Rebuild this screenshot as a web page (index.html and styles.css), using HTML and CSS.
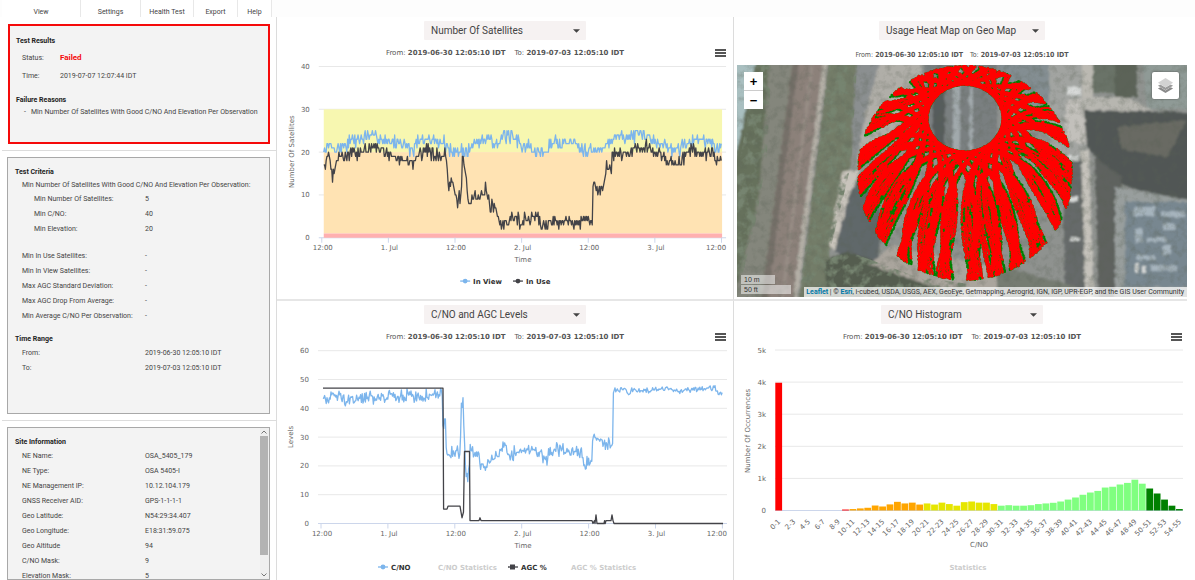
FILE: index.html
```
<!DOCTYPE html>
<html lang="en">
<head>
<meta charset="utf-8">
<title>GNSS Health Test</title>
<link rel="stylesheet" href="styles.css">
</head>
<body>
<nav class="ribbon">
  <button class="ribbon-tab tab-view" type="button">View</button>
  <button class="ribbon-tab tab-settings" type="button">Settings</button>
  <button class="ribbon-tab tab-health" type="button">Health Test</button>
  <button class="ribbon-tab tab-export" type="button">Export</button>
  <button class="ribbon-tab tab-help" type="button">Help</button>
</nav>
<main class="board">
  <aside class="sidebar">
    <div class="slot">
      <section class="card results">
        <h2>Test Results</h2>
        <dl class="facts wide">
          <div><dt>Status:</dt><dd class="failed">Failed</dd></div>
          <div><dt>Time:</dt><dd>2019-07-07 12:07:44 IDT</dd></div>
        </dl>
        <h2>Failure Reasons</h2>
        <ul class="reasons"><li>Min Number Of Satellites With Good C/NO And Elevation Per Observation</li></ul>
      </section>
    </div>
    <div class="slot">
      <section class="card criteria">
        <h2>Test Criteria</h2>
        <p class="lead">Min Number Of Satellites With Good C/NO And Elevation Per Observation:</p>
        <dl class="facts nested">
          <div><dt>Min Number Of Satellites:</dt><dd>5</dd></div>
          <div><dt>Min C/NO:</dt><dd>40</dd></div>
          <div><dt>Min Elevation:</dt><dd>20</dd></div>
        </dl>
        <dl class="facts limits">
          <div><dt>Min In Use Satellites:</dt><dd>-</dd></div>
          <div><dt>Min In View Satellites:</dt><dd>-</dd></div>
          <div><dt>Max AGC Standard Deviation:</dt><dd>-</dd></div>
          <div><dt>Max AGC Drop From Average:</dt><dd>-</dd></div>
          <div><dt>Min Average C/NO Per Observation:</dt><dd>-</dd></div>
        </dl>
        <h2>Time Range</h2>
        <dl class="facts">
          <div><dt>From:</dt><dd>2019-06-30 12:05:10 IDT</dd></div>
          <div><dt>To:</dt><dd>2019-07-03 12:05:10 IDT</dd></div>
        </dl>
      </section>
    </div>
    <div class="slot last">
      <section class="card site">
        <div class="site-body">
          <h2>Site Information</h2>
          <dl class="facts">
            <div><dt>NE Name:</dt><dd>OSA_5405_179</dd></div>
            <div><dt>NE Type:</dt><dd>OSA 5405-I</dd></div>
            <div><dt>NE Management IP:</dt><dd>10.12.104.179</dd></div>
            <div><dt>GNSS Receiver AID:</dt><dd>GPS-1-1-1-1</dd></div>
            <div><dt>Geo Latitude:</dt><dd>N54:29:34.407</dd></div>
            <div><dt>Geo Longitude:</dt><dd>E18:31:59.075</dd></div>
            <div><dt>Geo Altitude</dt><dd>94</dd></div>
            <div><dt>C/NO Mask:</dt><dd>9</dd></div>
            <div><dt>Elevation Mask:</dt><dd>5</dd></div>
          </dl>
        </div>
        <div class="scrollbar">
          <svg viewBox="0 0 8 8"><path d="M1.5 5.5 4 3l2.5 2.5"/></svg>
          <div class="thumb"></div>
          <svg viewBox="0 0 8 8"><path d="M1.5 2.5 4 5l2.5-2.5"/></svg>
        </div>
      </section>
    </div>
  </aside>

  <section class="panel">
    <label class="picker"><select aria-label="Chart 1"><option>Number Of Satellites</option><option>C/NO and AGC Levels</option></select><svg viewBox="0 0 8 4"><path d="M0 0h8L4 4z"/></svg></label>
    <div class="caption"><span>From: <b>2019-06-30 12:05:10 IDT</b></span><span>To: <b>2019-07-03 12:05:10 IDT</b></span>
      <button class="menu" type="button" aria-label="Chart menu"><i></i><i></i><i></i></button></div>
    <svg class="plot" id="satellites" viewBox="0 0 456 240"></svg>
  </section>

  <section class="panel map-panel">
    <label class="picker map-picker"><select aria-label="Chart 2"><option>Usage Heat Map on Geo Map</option><option>C/NO Histogram</option></select><svg viewBox="0 0 8 4"><path d="M0 0h8L4 4z"/></svg></label>
    <div class="caption map-caption"><span>From: <b>2019-06-30 12:05:10 IDT</b></span><span>To: <b>2019-07-03 12:05:10 IDT</b></span></div>
    <div class="map">
      <svg class="imagery" viewBox="0 0 450 232" preserveAspectRatio="xMidYMid slice">
        <defs>
          <filter id="soft" x="-5%" y="-5%" width="110%" height="110%"><feTurbulence type="fractalNoise" baseFrequency=".2" numOctaves="2" seed="4"/><feDisplacementMap in="SourceGraphic" scale="4" xChannelSelector="R" yChannelSelector="G"/><feGaussianBlur stdDeviation=".8"/></filter>
          <filter id="grain" x="0" y="0" width="100%" height="100%"><feTurbulence type="fractalNoise" baseFrequency=".12" numOctaves="4" seed="9"/><feColorMatrix values="0 0 0 0 .1  0 0 0 0 .12  0 0 0 0 .09  2.6 0 0 0 -1.15"/></filter>
          <filter id="leaf" x="0" y="0" width="100%" height="100%"><feTurbulence type="fractalNoise" baseFrequency=".1" numOctaves="3" seed="2"/><feColorMatrix values="0 0 0 0 .18  0 0 0 0 .23  0 0 0 0 .16  4 0 0 0 -1.8"/><feComposite in2="SourceGraphic" operator="in"/></filter>
        </defs>
        <rect width="450" height="232" fill="#8f928f"/>
        <g filter="url(#soft)">
          <path d="M-5-5H24L-5 110z" fill="#a9bfc0"/>
          <path d="M20-5H34L30 90 18 160-5 240V110z" fill="#66715c"/>
          <path d="M32-5H58L25 240H-5L22 130z" fill="#84867b"/>
          <path d="M56-5H90L58 240H24z" fill="#8c817a"/>
          <path d="M56-5H62L30 240H24z" fill="#767069"/>
          <path d="M74-5H77L46 240H43z" fill="#988e86"/>
          <path d="M86-5H91L60 240H55z" fill="#b3afa6"/>
          <path d="M92-5H120L114 100 92 190 110 240H62z" fill="#737c67"/>
          <path d="M120-5H145L132 80 118 105 115 60z" fill="#8b8f90"/>
          <path d="M143-5H186L180 40 118 104 128 50z" fill="#b0aea8"/>
          <path d="M105 106 124 105 98 186 92 180z" fill="#c9c4bc"/>
          <path d="M112 130 124 107 145 150 140 205 98 186z" fill="#61686b"/>
          <path d="M88 196 110 186 180 212 300 215V240H90z" fill="#555d50"/>
          <path d="M132 200 155 180 300 212 340 240H250z" fill="#aaa59d"/>
          <path d="M188-5H260V90H190z" fill="#7a7f80"/>
          <path d="M196 20h12v70h-12z" fill="#565b5b"/>
          <path d="M216-5h7V95h-7zM232-5h4V95h-4z" fill="#a1a9ac"/>
          <path d="M262-5h50V40h-50z" fill="#848e92"/>
          <path d="M312-5h36V110h-36z" fill="#a2a4a1"/>
          <path d="M330 35 350 33 352 80 326 75z" fill="#c2c0bb"/>
          <path d="M345-5h11V40h-11z" fill="#bbb9b2"/>
          <path d="M356-5h22V28h-22z" fill="#6a7368"/>
          <path d="M378-5h22V32h-22z" fill="#5b6459"/>
          <path d="M405-5H460V44H410z" fill="#8f9a96"/>
          <path d="M345 32H390L420 48H345z" fill="#b7b6b0"/>
          <path d="M347 45 460 48V145L380 118 350 82z" fill="#515654"/>
          <path d="M380 62 450 55 430 92 385 84z" fill="#696b63"/>
          <path d="M358 92 384 112V240H362z" fill="#5e625f"/>
          <path d="M344 85H352L357 240H348z" fill="#c5c2bb"/>
          <path d="M326 90H344L348 225H328z" fill="#666b6a"/>
          <path d="M378 122 460 136V240H378z" fill="#989e9d"/>
          <path d="M388 137H460V222H388z" fill="#788790"/>
          <g fill="#a6b4bd"><path d="M396 142h22v9h-22zM424 146h24v6h-24zM398 164h8v14h-8zM410 172h20v5h-20zM426 158h12v7h-12zM400 190h18v5h-18zM426 180h8v10h-8zM414 200h26v6h-26z"/></g>
          <g fill="#d7d9d8"><path d="M330 90h12v6h-12zM330 132h11v4h-11zM333 172h9v4h-9zM330 22h14v8h-14zM398 198h4v10h-4zM405 200h3v8h-3z"/></g>
          <path d="M260 200 340 222V240H260z" fill="#767b72"/>
        </g>
        <path d="M20 0H34L30 90 18 160 0 232V110zM92 0H120L114 100 92 190 110 232H62zM88 196 110 186 180 212 240 220V232H90z" fill="#000" filter="url(#leaf)"/>
        <rect width="450" height="232" filter="url(#grain)" opacity=".3"/>
        <g id="tracks" fill="none" stroke-linecap="round" stroke-linejoin="round"></g>
      </svg>
      <div class="zoomer"><button type="button" aria-label="Zoom in">+</button><button type="button" aria-label="Zoom out">−</button></div>
      <button class="layers" type="button" aria-label="Layers"><svg viewBox="0 0 18 18"><path d="M1 12.2 9 17l8-4.8-2.5-1.3L9 14.2l-5.500-3.300z" fill="#8a8a8a"/><path d="M1 9.200 9 14l8-4.800-2.500-1.300L9 11.200 3.500 7.900z" fill="#9b9b9b"/><path d="M1 6 9 1l8 5-8 5z" fill="#d2d2d2"/></svg></button>
      <div class="scale"><span class="metric">10 m</span><span class="imperial">50 ft</span></div>
      <div class="credit"><a href="#leaflet">Leaflet</a> | © <a href="#esri">Esri</a>, i-cubed, USDA, USGS, AEX, GeoEye, Getmapping, Aerogrid, IGN, IGP, UPR-EGP, and the GIS User Community</div>
    </div>
  </section>

  <section class="panel">
    <label class="picker"><select aria-label="Chart 3"><option>C/NO and AGC Levels</option><option>Number Of Satellites</option></select><svg viewBox="0 0 8 4"><path d="M0 0h8L4 4z"/></svg></label>
    <div class="caption"><span>From: <b>2019-06-30 12:05:10 IDT</b></span><span>To: <b>2019-07-03 12:05:10 IDT</b></span>
      <button class="menu" type="button" aria-label="Chart menu"><i></i><i></i><i></i></button></div>
    <svg class="plot" id="levels" viewBox="0 0 456 236"></svg>
  </section>

  <section class="panel histogram-panel">
    <label class="picker"><select aria-label="Chart 4"><option>C/NO Histogram</option><option>Usage Heat Map on Geo Map</option></select><svg viewBox="0 0 8 4"><path d="M0 0h8L4 4z"/></svg></label>
    <div class="caption"><span>From: <b>2019-06-30 12:05:10 IDT</b></span><span>To: <b>2019-07-03 12:05:10 IDT</b></span>
      <button class="menu" type="button" aria-label="Chart menu"><i></i><i></i><i></i></button></div>
    <svg class="plot" id="histogram" viewBox="0 0 450 236"></svg>
  </section>
</main>
<script src="charts.js"></script>
</body>
</html>
```
FILE: styles.css
```
* { box-sizing: border-box; }
body {
  margin: 0;
  height: 100vh;
  display: flex;
  flex-direction: column;
  overflow: hidden;
  background: #fff;
  color: #444;
  font: 7px/15px Roboto, "Open Sans", sans-serif;
}
button, select { font: inherit; color: inherit; border: 0; margin: 0; padding: 0; }

.ribbon { display: flex; height: 17px; padding-left: 2px; background: #fdfdfd; flex: none; }
.ribbon-tab { background: #fff; border-right: 1px solid #e8e8e8; padding-top: 6px; line-height: 10px; }
.tab-view { width: 79px; }
.tab-settings { width: 60px; }
.tab-health { width: 53px; }
.tab-export { width: 44px; }
.tab-help { width: 34px; }

.board {
  flex: 1;
  min-height: 0;
  display: grid;
  grid-template-columns: 277px 457fr 453fr;
  grid-template-rows: 284fr 279fr;
  padding-right: 8px;
}

.sidebar {
  grid-row: 1 / 3;
  display: flex;
  flex-direction: column;
  min-height: 0;
  padding-left: 2px;
  border-right: 1px solid #dcdcdc;
}
.slot { padding: 6px 6px 6px 5px; border-bottom: 1px solid #dcdcdc; flex: none; }
.slot:first-child { padding-top: 7px; }
.slot.last { flex: 1; min-height: 0; border-bottom: 0; padding-bottom: 0; display: flex; }
.card { background: #f3f3f3; border: 1px solid #a8a8a8; padding: 8px 7px; }
.results { border: 2px solid #f50a0a; margin-left: 1px; min-height: 120px; padding: 9px 6px; }
.criteria { min-height: 257px; }
.site { flex: 1; display: flex; padding: 0; overflow: hidden; }
.site-body { flex: 1; padding: 8px 7px; white-space: nowrap; }
h2 { margin: 0 0 1px; font-size: 7px; line-height: 12px; font-weight: 700; color: #222; }
.facts { margin: 0; padding-left: 7px; }
.facts div { display: flex; }
.facts dt { width: 123px; white-space: nowrap; }
.facts dd { margin: 0; }
.facts.wide { line-height: 18px; margin-top: 2px; padding-left: 6px; }
.facts.wide dt { width: 38px; }
.facts .failed { color: #f50a0a; font-weight: 700; font-size: 8px; }
.facts.wide + h2 { margin: 9px 0 0; }
.facts.nested { padding-left: 19px; }
.facts.nested dt { width: 111px; }
.limits { margin-top: 12px; }
.limits + h2 { margin-top: 9px; }
.lead { margin: 0 0 1px; padding-left: 7px; line-height: 12px; white-space: nowrap; }
.reasons { margin: 0; padding-left: 8px; list-style: none; line-height: 12px; white-space: nowrap; }
.reasons li::before { content: "-"; display: inline-block; width: 7px; }
.scrollbar { width: 9px; display: flex; flex-direction: column; background: #efefef; }
.scrollbar svg { width: 8px; height: 8px; flex: none; fill: none; stroke: #777; }
.thumb { flex: none; height: 119px; width: 8px; background: #b3b3b3; margin-bottom: auto; }

.panel {
  display: flex;
  flex-direction: column;
  min-width: 0;
  min-height: 0;
  padding-top: 4px;
  border-right: 1px solid #dcdcdc;
}
.panel:nth-child(-n + 3) { border-bottom: 2px solid #e6e6e6; }
.map-panel, .histogram-panel { border-right: 0; padding-left: 3px; }
.picker { position: relative; align-self: center; width: 162px; height: 19px; flex: none; }
.map-picker { width: 166px; }
.picker select {
  width: 100%;
  height: 100%;
  appearance: none;
  background: #f6f2f2;
  border-radius: 1px;
  padding: 0 7px;
  font-size: 10px;
}
.picker svg { position: absolute; right: 6px; top: 8px; width: 7px; height: 4px; fill: #444; pointer-events: none; }
.caption {
  position: relative;
  display: flex;
  justify-content: center;
  gap: 9px;
  flex: none;
  padding-top: 6px;
  height: 20px;
  font: 7px/15px "DejaVu Sans", sans-serif;
  color: #555;
}
.map-caption { font-family: "DejaVu Sans Condensed", "DejaVu Sans", sans-serif; padding-top: 8px; height: 25px; gap: 7px; }
.menu {
  position: absolute;
  right: 7px;
  top: 9px;
  width: 11px;
  background: none;
  display: grid;
  gap: 1px;
}
.histogram-panel .menu { right: 5px; }
.menu i { height: 2px; background: #555; }

.plot { flex: 1; min-height: 0; width: 100%; display: block; font: 7px "DejaVu Sans", sans-serif; fill: #666; }
.plot line { stroke: #e8e8e8; }
.plot .axis { stroke: #ccd6eb; }
.plot .legend { font-weight: 700; fill: #333; }
.plot .legend.off { fill: #ccc; }

.map { position: relative; flex: 1; min-height: 0; overflow: hidden; margin-bottom: 2px; background: #888; }
.imagery { display: block; width: 100%; height: 100%; }
.zoomer { position: absolute; left: 7px; top: 7px; width: 19px; display: grid; gap: 1px; background: #ccc; border-radius: 2px; }
.zoomer button { height: 18px; background: #fff; color: #000; font: 700 13px/17px "Liberation Sans", sans-serif; }
.layers { position: absolute; right: 8px; top: 7px; width: 27px; height: 27px; background: #fff; border-radius: 2px; box-shadow: 0 0 2px #444; padding: 5px; }
.layers svg { display: block; width: 17px; height: 17px; }
.scale { position: absolute; left: 4px; bottom: 3px; font: 7px/9px "Liberation Sans", sans-serif; color: #333; display: grid; gap: 1px; }
.scale span { background: rgba(255, 255, 255, .5); padding-left: 3px; height: 9px; }
.metric { width: 34px; }
.imperial { width: 50px; }
.credit {
  position: absolute;
  right: 0;
  bottom: 0;
  padding: 0 3px 0 2px;
  background: rgba(255, 255, 255, .72);
  font: 7px/10px Roboto, sans-serif;
  color: #333;
  white-space: nowrap;
}
.credit a { color: #0078a8; text-decoration: none; font-weight: 700; }
```
FILE: charts.js
```
const NS = 'http://www.w3.org/2000/svg';
function add(parent, tag, attrs, text) {
  const el = document.createElementNS(NS, tag);
  for (const k in attrs) el.setAttribute(k, attrs[k]);
  if (text !== undefined) el.textContent = text;
  parent.appendChild(el);
  return el;
}
let seed = 7;
function rnd() {
  seed = (seed * 1664525 + 1013904223) % 4294967296;
  return seed / 4294967296;
}
function envelope(points, x) {
  for (let i = 1; i < points.length; i++) {
    const [x0, v0] = points[i - 1], [x1, v1] = points[i];
    if (x <= x1) return v0 + (v1 - v0) * (x - x0) / (x1 - x0 || 1);
  }
  return points[points.length - 1][1];
}
function trace(s, toY) {
  let d = '';
  for (let x = 0; x <= 400; x += 0.8) {
    const spread = s.calmFrom && x > s.calmFrom ? 1.1 : s.spread;
    let v = envelope(s.points, x) + (rnd() + rnd() - 1) * spread;
    if (s.whole) v = Math.max(2, Math.round(v));
    d += (d ? 'L' : 'M') + (46 + x).toFixed(1) + ' ' + toY(v).toFixed(1);
  }
  return d;
}
function timeChart(svg, o) {
  const toY = v => o.zero - v * o.unit;
  for (let v = 0; v <= o.max; v += 10) {
    add(svg, 'line', { x1: 41, x2: 450, y1: toY(v), y2: toY(v), class: v ? '' : 'axis' });
    add(svg, 'text', { x: 32, y: toY(v) + 2.5, 'text-anchor': 'end' }, v);
  }
  (o.bands || []).forEach(([a, b, fill]) =>
    add(svg, 'rect', { x: 46, width: 400, y: toY(b), height: toY(a) - toY(b), fill }));
  ['12:00', '1. Jul', '12:00', '2. Jul', '12:00', '3. Jul', '12:00'].forEach((t, i) => {
    const x = 44 + i * 66.9;
    add(svg, 'line', { x1: x, x2: x, y1: o.zero, y2: o.zero + 5, class: 'axis' });
    add(svg, 'text', { x: i === 6 ? 450 : x + 1, y: o.zero + 12, 'text-anchor': i === 6 ? 'end' : 'middle' }, t);
  });
  add(svg, 'text', { x: 246, y: o.zero + 24, 'text-anchor': 'middle' }, 'Time');
  add(svg, 'text', { transform: `translate(16 ${o.titleY}) rotate(-90)`, 'text-anchor': 'middle' }, o.title);
  o.series.forEach(s => add(svg, 'path', {
    d: s.raw ? s.points.map(([x, v], i) => (i ? 'L' : 'M') + (46 + x) + ' ' + toY(v)).join('') : trace(s, toY),
    fill: 'none', stroke: s.color, 'stroke-width': 1.3, 'stroke-linejoin': 'round'
  }));
  o.legend.forEach(([t, x, color, square]) => {
    const y = o.legendY;
    if (color) {
      add(svg, 'path', { d: `M${x - 13} ${y}h10`, stroke: color, 'stroke-width': 1.3 });
      if (square) add(svg, 'rect', { x: x - 11, y: y - 2.5, width: 5, height: 5, fill: color });
      else add(svg, 'circle', { cx: x - 8, cy: y, r: 2.4, fill: color });
    }
    add(svg, 'text', { x, y: y + 2.5, class: color ? 'legend' : 'legend off' }, t);
  });
}
const BLUE = '#7cb5ec', DARK = '#434348';

timeChart(document.getElementById('satellites'), {
  zero: 178.5, unit: 4.3, max: 40, title: 'Number Of Satellites', titleY: 92, legendY: 222,
  bands: [[20, 30, '#f7f7b0'], [1, 20, '#ffe3b3'], [0, 1, '#ffb0b0']],
  series: [
    { color: BLUE, spread: 2.1, whole: true, points: [[0,19.5],[3,21.5],[12,20.8],[21,21.5],[31,23],[55,23.7],[65,22.5],[83,22],[88,20],[93,22],[105,23],[120,22.3],[125,20.3],[145,20.3],[151,22],[165,23.7],[175,22],[181,23.7],[187,23.5],[198,22],[210,20.5],[224,19.8],[227,22],[253,22.5],[260,21],[278,20.3],[283,21.5],[292,23.7],[330,23.5],[337,22],[357,20.5],[360,22.5],[380,23],[390,21.5],[400,20.5]] },
    { color: DARK, spread: 2.2, whole: true, points: [[0,17.5],[3,17.5],[5,20],[8,14.8],[13,18],[18,19],[25,20],[45,20.5],[56,22],[62,19.5],[75,18],[90,17.5],[95,20],[105,20.5],[115,19],[122,19],[124,16],[126,12],[128,13],[132,9],[135,8],[137,10],[138.2,10],[138.8,20],[140,19.5],[142,16],[144,10],[147,7],[150,10],[160,10],[163,11.5],[165,8.5],[172,7],[177,4],[180,3.2],[185,3.2],[188,5],[200,3.8],[209,5],[213,5],[219,2.6],[224,2.6],[225,4],[234,3.3],[242,5],[250,2.8],[259,4],[264,5],[267,3.5],[269.5,3],[270.4,12],[275,11],[279,11.5],[284,16.5],[289,16],[290,20],[304,20],[312,20.3],[324,21.8],[330,20],[340,18.5],[350,17.5],[359,17.5],[364,20],[370,21],[380,19.5],[387,20],[394,18],[400,18]] }
  ],
  legend: [['In View', 196, BLUE], ['In Use', 249, DARK]]
});

timeChart(document.getElementById('levels'), {
  zero: 179.5, unit: 2.88, max: 60, title: 'Levels', titleY: 93, legendY: 223,
  series: [
    { color: BLUE, spread: 2.8, calmFrom: 290, points: [[0,44],[5,42.8],[8,44.5],[25,43.2],[40,43.5],[75,44],[88,44.8],[100,43],[103,44.8],[119.6,45.5],[120,35.5],[122.4,35.5],[123,25],[128,24],[134,26],[137,23.5],[138.3,42],[140,42],[141,30],[143,17],[146,17],[147,26],[151,24],[156,24],[158,20],[163,19.5],[170,22],[180,26.5],[188,23.5],[194,25.5],[217,25],[224,21.5],[226,25],[234,25.5],[259,25],[260.5,21],[269,20.8],[270,31],[273,30],[284,27.5],[289.8,28.5],[290.4,46.3],[302,46.3],[306,44.8],[309,46.5],[325,46],[345,47],[355,46],[375,46.5],[392,47],[395,45],[400,45.5]] },
    { color: DARK, raw: true, points: [[0,47],[120,47],[120.6,5],[124,5],[125,6],[137,6],[139,2],[140.5,4],[141.5,25],[146.5,25],[147,1],[156,1],[157,2],[158,1],[269,1],[270,0],[271.5,1],[272,0],[273,3],[274,0],[281,0],[281.6,1],[282.2,0],[283,1],[288,1],[289,3],[290,1],[291,0],[400,0]] }
  ],
  legend: [['C/NO', 114, BLUE], ['C/NO Statistics', 161], ['AGC %', 244, DARK, true], ['AGC % Statistics', 294]]
});

const hist = document.getElementById('histogram');
for (let k = 0; k <= 5; k++) {
  const y = 166.5 - k * 32.1;
  add(hist, 'line', { x1: 38, x2: 446, y1: y, y2: y, class: k ? '' : 'axis' });
  add(hist, 'text', { x: 29, y: y + 2.5, 'text-anchor': 'end' }, k ? k + 'k' : '0');
}
const counts = [3980,0,0,0,0,0,0,0,0,30,45,65,85,155,125,190,270,220,245,185,220,185,245,200,150,260,280,245,245,200,150,165,150,150,165,200,220,240,280,340,405,490,560,610,715,740,810,860,960,835,685,530,340,150,45];
counts.forEach((c, i) => {
  const fill = i < 10 ? '#ff0000' : i < 20 ? '#ffa500' : i < 30 ? '#e6e600' : i < 50 ? '#80ff80' : '#008000';
  const x = 38 + i * 7.42, h = c * 0.0321;
  if (c) add(hist, 'rect', { x: x + 0.3, width: 6.8, y: 166.5 - h, height: h, fill });
  if (i % 2 === 0) add(hist, 'text', { transform: `translate(${x + 6} 178) rotate(-45)`, 'text-anchor': 'end' }, i + '-' + (i + 1));
});
add(hist, 'text', { x: 242, y: 203, 'text-anchor': 'middle' }, 'C/NO');
add(hist, 'text', { transform: 'translate(13 87) rotate(-90)', 'text-anchor': 'middle' }, 'Number Of Occurrences');
add(hist, 'text', { x: 231, y: 225.5, 'text-anchor': 'middle', class: 'legend off' }, 'Statistics');

/* Sky plot of satellite passes: orbit geometry seen from the site, north up. */
const RAD = Math.PI / 180, SITE = 54.5 * RAD, INCL = 67.5 * RAD;
function skyPoint(u, node) {
  const lat = Math.asin(Math.sin(INCL) * Math.sin(u));
  const lon = node + Math.atan2(Math.cos(INCL) * Math.sin(u), Math.cos(u)) - u / 2;
  const n = Math.cos(SITE) * Math.sin(lat) - Math.sin(SITE) * Math.cos(lat) * Math.cos(lon);
  const e = Math.cos(lat) * Math.sin(lon);
  const up = Math.sin(SITE) * Math.sin(lat) + Math.cos(SITE) * Math.cos(lat) * Math.cos(lon) - 0.24;
  const flat = Math.hypot(n, e), zen = Math.atan2(flat, up) / RAD;
  if (zen > 86) return null;
  const r = zen / 86 * 107;
  return [228 + e / flat * r, 108 - n / flat * r];
}
let green = '', red = '';
for (let s = 0; s < 28; s++) {
  const node = (s * 12.857 + rnd() * 6) * RAD;
  for (let k = 0; k < 4; k++) {
    let on = true;
    for (let u = 0; u < 4 * Math.PI; u += 0.016) {
      const p = skyPoint(u, node + (k - 1.5) * 0.023);
      if (!p) continue;
      if (rnd() < 0.2) on = rnd() < (k === 3 ? 0.2 : 0.85);
      const dot = `M${(p[0] + rnd() - 0.5).toFixed(1)} ${(p[1] + rnd() - 0.5).toFixed(1)}h0`;
      green += dot;
      if (on) red += dot;
    }
  }
}
const tracks = document.getElementById('tracks');
add(tracks, 'path', { d: green, stroke: '#008000', 'stroke-width': 2.4 });
add(tracks, 'path', { d: red, stroke: '#ff0000', 'stroke-width': 2.3 });
```
